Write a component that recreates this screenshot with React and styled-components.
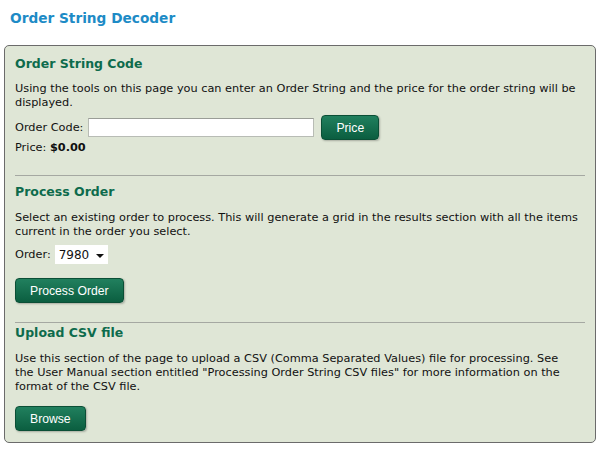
import React from 'react';
import styled, { createGlobalStyle } from 'styled-components';

const Global = createGlobalStyle`
  body {
    margin: 0;
    background: #ffffff;
    font-family: "DejaVu Sans", Verdana, sans-serif;
    font-size: 11.3px;
    color: #111;
  }
`;

const Page = styled.div`
  padding: 8px 17px 0 4px;
`;

const Title = styled.h1`
  margin: 0 0 17px 6px;
  font-size: 13.7px;
  font-weight: bold;
  color: #1d8bc6;
  line-height: 20px;
`;

const Panel = styled.div`
  background: #dfe6d6;
  border: 1px solid #6b6b6b;
  border-radius: 5px;
  padding: 8px 10px 11px 10px;
`;

const Section = styled.section`
  border-bottom: ${p => (p.last ? 'none' : '1px solid #a5a8a2')};
  margin-top: ${p => p.mt || '0'};
  padding-bottom: ${p => p.pb || '0'};
`;

const Heading = styled.h2`
  margin: 0 0 ${p => p.mb || '8px'} 0;
  font-size: 12.5px;
  font-weight: bold;
  color: #0d6b4c;
  line-height: 20px;
`;

const Text = styled.p`
  margin: 0 0 ${p => p.mb || '6px'} 0;
  max-width: ${p => p.maxw || 'none'};
  line-height: 14px;
`;

const Row = styled.div`
  display: flex;
  align-items: center;
  gap: 4px;
  margin-bottom: ${p => p.mb || '0'};
`;

const Input = styled.input`
  width: 222px;
  height: 15px;
  border: 1px solid #b8bcb5;
  border-top-color: #9a9d97;
  background: #fff;
  padding: 1px;
  margin: 0 3px 0 1px;
`;

const Button = styled.button`
  display: block;
  font-family: "Liberation Sans", Arial, sans-serif;
  font-size: 12.2px;
  color: #ffffff;
  height: 25px;
  padding: 0 14px;
  border: 1px solid #0b4f36;
  border-radius: 4px;
  background: linear-gradient(#21805e, #0b5e40);
  box-shadow: 1px 1px 2px rgba(0, 0, 0, 0.25);
  cursor: pointer;
`;

const Price = styled.div`
  margin-top: 1px;
  line-height: 14px;
  b { font-weight: bold; }
`;

const Select = styled.div`
  display: inline-flex;
  align-items: center;
  justify-content: space-between;
  width: 53px;
  height: 19px;
  box-sizing: border-box;
  background: #fff;
  padding: 0 4px 0 4px;
  font-size: 12px;
`;

const Caret = styled.span`
  width: 0;
  height: 0;
  border-left: 4px solid transparent;
  border-right: 4px solid transparent;
  border-top: 4px solid #111;
  margin-top: 2px;
`;

export default function App() {
  return (
    <>
      <Global />
      <Page>
        <Title>Order String Decoder</Title>
        <Panel>
          <Section pb="20px">
            <Heading>Order String Code</Heading>
            <Text mb="5px">
              Using the tools on this page you can enter an Order String and the price for the order string will be displayed.
            </Text>
            <Row>
              <span>Order Code:</span>
              <Input type="text" />
              <Button>Price</Button>
            </Row>
            <Price>Price: <b>$0.00</b></Price>
          </Section>
          <Section mt="6px" pb="19px">
            <Heading mb="9px">Process Order</Heading>
            <Text>
              Select an existing order to process. This will generate a grid in the results section with all the items current in the order you select.
            </Text>
            <Row mb="14px">
              <span>Order:</span>
              <Select>7980 <Caret /></Select>
            </Row>
            <Button>Process Order</Button>
          </Section>
          <Section last mt="0px">
            <Heading mb="9px">Upload CSV file</Heading>
            <Text mb="12px" maxw="560px">
              Use this section of the page to upload a CSV (Comma Separated Values) file for processing. See the User Manual section entitled "Processing Order String CSV files" for more information on the format of the CSV file.
            </Text>
            <Button>Browse</Button>
          </Section>
        </Panel>
      </Page>
    </>
  );
}
